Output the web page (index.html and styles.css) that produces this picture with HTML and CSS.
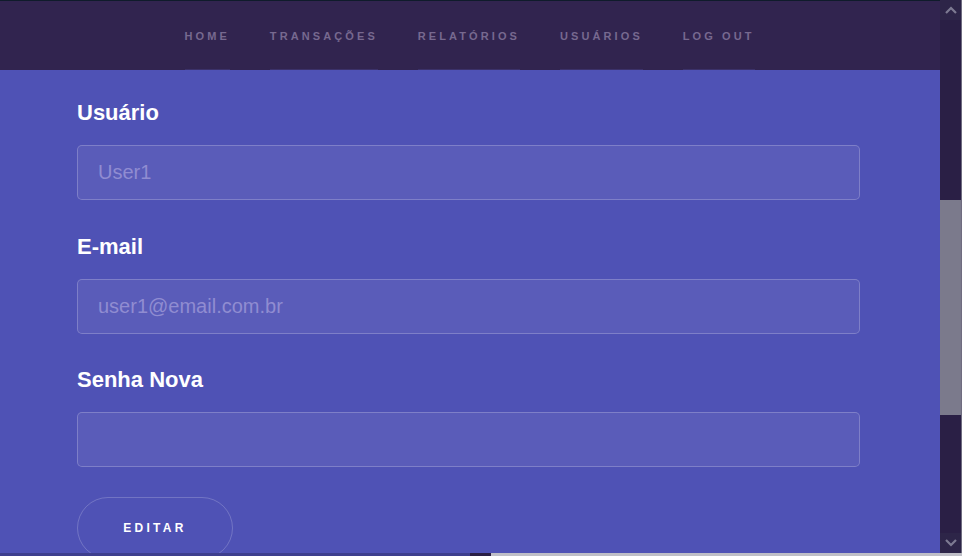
FILE: index.html
```html
<!DOCTYPE html>
<html lang="pt-BR">
<head>
<meta charset="utf-8">
<title>Usuários</title>
<link rel="stylesheet" href="styles.css">
</head>
<body>
<div class="app">
  <div class="main">
    <nav class="nav">
      <a class="nav-item">HOME</a>
      <a class="nav-item">TRANSAÇÕES</a>
      <a class="nav-item">RELATÓRIOS</a>
      <a class="nav-item">USUÁRIOS</a>
      <a class="nav-item">LOG OUT</a>
    </nav>
    <section class="content">
      <form class="form">
        <div class="group">
          <label class="label">Usuário</label>
          <input class="field" type="text" placeholder="User1">
        </div>
        <div class="group">
          <label class="label">E-mail</label>
          <input class="field" type="text" placeholder="user1@email.com.br">
        </div>
        <div class="group">
          <label class="label">Senha Nova</label>
          <input class="field" type="password">
        </div>
        <button class="btn" type="button">EDITAR</button>
      </form>
    </section>
  </div>
  <div class="scrollbar">
    <div class="sb-btn"><svg width="12" height="8" viewBox="0 0 12 8"><path d="M1 7 L6 2 L11 7" fill="none" stroke="#7d7a92" stroke-width="2.2"/></svg></div>
    <div class="sb-track sb-upper"></div>
    <div class="sb-thumb"></div>
    <div class="sb-track sb-lower"></div>
    <div class="sb-btn"><svg width="12" height="8" viewBox="0 0 12 8"><path d="M1 1 L6 6 L11 1" fill="none" stroke="#7d7a92" stroke-width="2.2"/></svg></div>
  </div>
</div>
<div class="hbar">
  <div class="hb-a"></div>
  <div class="hb-b"></div>
  <div class="hb-c"></div>
</div>
</body>
</html>
```
FILE: styles.css
```css
* { box-sizing: border-box; }
html, body {
  margin: 0;
  padding: 0;
  width: 962px;
  height: 556px;
  overflow: hidden;
  background: #4f52b5;
  font-family: "Liberation Sans", Arial, sans-serif;
}
.app {
  display: flex;
  height: 553px;
}
.main {
  width: 940px;
  display: flex;
  flex-direction: column;
  background: #4f52b5;
}
.nav {
  height: 70px;
  flex: none;
  background: #31244f;
  border-top: 1px solid #0f1b2b;
  display: flex;
  justify-content: center;
  gap: 43px;
  padding-right: 4px;
}
.nav-item {
  display: flex;
  align-items: center;
  padding-top: 1px;
  height: 100%;
  font-size: 11px;
  font-weight: bold;
  letter-spacing: 3.1px;
  margin-right: -3.1px;
  color: #77698f;
  border-bottom: 1px solid #3b3169;
}
.content {
  flex: 1;
  padding: 30px 0 0 77px;
}
.form {
  width: 783px;
  display: flex;
  flex-direction: column;
}
.group {
  display: flex;
  flex-direction: column;
  margin-bottom: 33.5px;
}
.group:last-of-type { margin-bottom: 30px; }
.label {
  font-size: 22px;
  line-height: 26px;
  font-weight: bold;
  color: #ffffff;
  margin-bottom: 19px;
}
.field {
  height: 55px;
  width: 100%;
  border: 1px solid rgba(255,255,255,0.22);
  border-radius: 5px;
  background: #5a5cb9;
  padding: 0 20px;
  font-family: "Liberation Sans", Arial, sans-serif;
  font-size: 20px;
  color: #ffffff;
  outline: none;
}
.field::placeholder { color: #908cd1; }
.btn {
  width: 156px;
  height: 62px;
  border: 1px solid rgba(255,255,255,0.2);
  border-radius: 31px;
  background: transparent;
  color: #ffffff;
  font-family: "Liberation Sans", Arial, sans-serif;
  font-size: 12px;
  font-weight: bold;
  letter-spacing: 3.3px;
  padding: 0 0 1px 0;
  align-self: flex-start;
}
.scrollbar {
  width: 22px;
  display: flex;
  flex-direction: column;
  background: #2a1f45;
  border-right: 1px solid #6f6c80;
}
.sb-btn {
  height: 20px;
  flex: none;
  display: flex;
  align-items: center;
  justify-content: center;
  background: #2d2548;
}
.sb-upper { height: 180px; flex: none; }
.sb-thumb { height: 215px; flex: none; background: #7b7a8c; }
.sb-lower { flex: 1; }
.hbar {
  display: flex;
  height: 3px;
}
.hb-a { width: 470px; background: #3e3f8e; }
.hb-b { width: 21px; background: #2a1f45; }
.hb-c { flex: 1; background: #bfbfc7; }
```
